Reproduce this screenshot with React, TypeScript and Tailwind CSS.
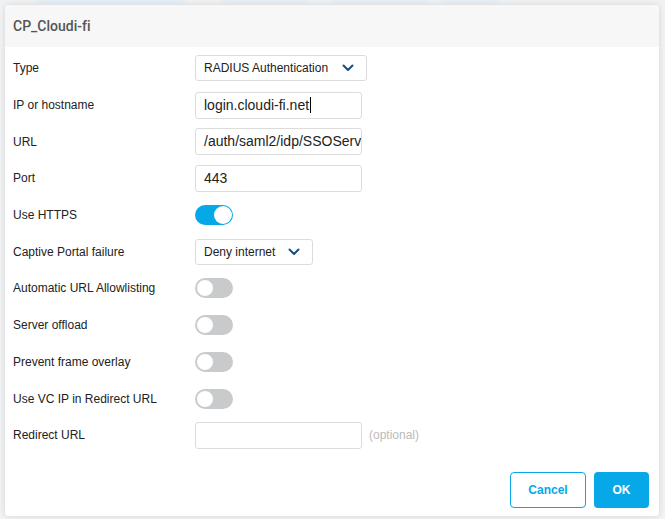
import React from "react";

const Chevron = () => (
  <svg width="12" height="8" viewBox="0 0 12 8" className="shrink-0">
    <path d="M1.5 1.5 L6 6 L10.5 1.5" fill="none" stroke="#1d4e7e" strokeWidth="2" strokeLinecap="round" strokeLinejoin="round" />
  </svg>
);

function Toggle({ on }: { on?: boolean }) {
  return (
    <div
      className={`flex h-[20px] w-[38px] items-center rounded-full px-[1px] ${on ? "justify-end bg-[#06a8e8]" : "justify-start bg-[#c9cacc]"}`}
    >
      <div className={`h-[18px] w-[18px] rounded-full bg-white ${on ? "" : "border border-[#c9cacc]"}`}></div>
    </div>
  );
}

function Row({ label, children }: { label: string; children: React.ReactNode }) {
  return (
    <div className="flex h-[36.7px] items-center">
      <div className="w-[182px] shrink-0 text-[12px] text-[#222]">{label}</div>
      {children}
    </div>
  );
}

const inputCls =
  "flex h-[27px] w-[167px] items-center overflow-hidden whitespace-nowrap rounded-[3px] border border-[#dcdcdc] bg-white px-[8px] text-[14px] text-[#222]";

export default function App() {
  return (
    <div className="relative h-[519px] w-[665px] overflow-hidden bg-[#f1f2f3] font-['Liberation_Sans',Arial,sans-serif]">
      <div className="absolute left-[36px] top-[-10px] h-[14px] w-[150px] rounded-full bg-[#e3eef6] blur-[2px]"></div>
      <div className="absolute left-[220px] top-[-10px] h-[14px] w-[90px] rounded-full bg-[#e6eff6] blur-[2px]"></div>
      <div className="absolute left-[330px] top-[-10px] h-[14px] w-[100px] rounded-full bg-[#e6eff6] blur-[2px]"></div>
      <div className="absolute left-[440px] top-[-10px] h-[14px] w-[60px] rounded-full bg-[#e6eff6] blur-[2px]"></div>
      <div className="absolute left-[5px] top-[5px] flex h-[511px] w-[654px] flex-col overflow-hidden rounded-[4px] bg-white shadow-[0_0_6px_rgba(0,0,0,0.12)]">
        <div className="flex h-[42px] shrink-0 items-center bg-[#f7f7f7] px-[8px] font-['Roboto',sans-serif] text-[14px] font-medium text-[#555] [font-variant-ligatures:none]">
          CP_Cloudi-fi
        </div>
        <div className="flex flex-col px-[8px] pt-[3px]">
          <Row label="Type">
            <div className="flex h-[26px] w-[172px] items-center justify-between rounded-[3px] border border-[#dcdcdc] px-[8px] pr-[12px] text-[12px] text-[#222]">
              <span>RADIUS Authentication</span>
              <Chevron />
            </div>
          </Row>
          <Row label="IP or hostname">
            <div className={inputCls}>
              login.cloudi-fi.net<span className="ml-[1px] inline-block h-[16px] w-[1px] bg-black"></span>
            </div>
          </Row>
          <Row label="URL">
            <div className={inputCls}>/auth/saml2/idp/SSOService.php</div>
          </Row>
          <Row label="Port">
            <div className={inputCls}>443</div>
          </Row>
          <Row label="Use HTTPS">
            <Toggle on />
          </Row>
          <Row label="Captive Portal failure">
            <div className="flex h-[26px] w-[118px] items-center justify-between rounded-[3px] border border-[#dcdcdc] px-[8px] pr-[12px] text-[12px] text-[#222]">
              <span>Deny internet</span>
              <Chevron />
            </div>
          </Row>
          <Row label="Automatic URL Allowlisting">
            <Toggle />
          </Row>
          <Row label="Server offload">
            <Toggle />
          </Row>
          <Row label="Prevent frame overlay">
            <Toggle />
          </Row>
          <Row label="Use VC IP in Redirect URL">
            <Toggle />
          </Row>
          <Row label="Redirect URL">
            <div className={inputCls}></div>
            <span className="ml-[7px] text-[12px] text-[#bbb]">(optional)</span>
          </Row>
        </div>
        <div className="mt-auto flex justify-end gap-[8px] px-[10px] pb-[8px]">
          <button className="h-[36px] w-[76px] rounded-[4px] border border-[#06a8e8] bg-white text-[12px] font-bold text-[#06a8e8]">
            Cancel
          </button>
          <button className="h-[36px] w-[55px] rounded-[4px] bg-[#06a8e8] text-[12px] font-bold text-white">
            OK
          </button>
        </div>
      </div>
    </div>
  );
}
